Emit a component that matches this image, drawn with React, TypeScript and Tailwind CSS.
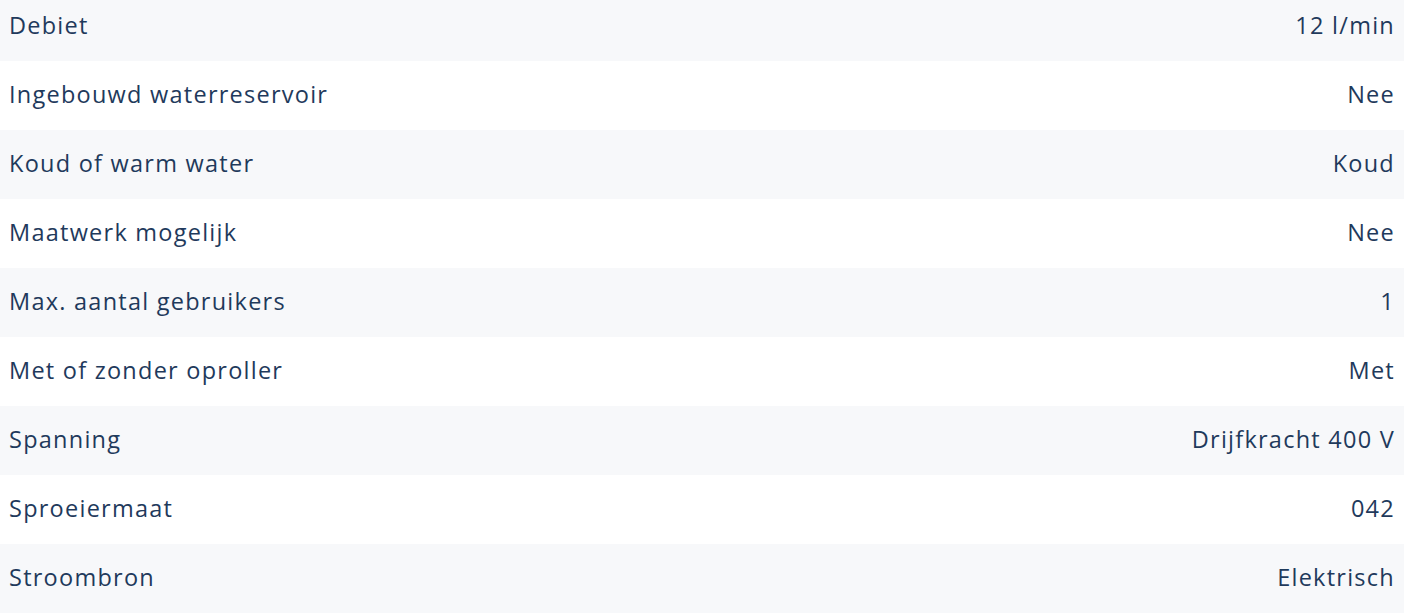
const specs = [
  { label: "Debiet", value: "12 l/min" },
  { label: "Ingebouwd waterreservoir", value: "Nee" },
  { label: "Koud of warm water", value: "Koud" },
  { label: "Maatwerk mogelijk", value: "Nee" },
  { label: "Max. aantal gebruikers", value: "1" },
  { label: "Met of zonder oproller", value: "Met" },
  { label: "Spanning", value: "Drijfkracht 400 V" },
  { label: "Sproeiermaat", value: "042" },
  { label: "Stroombron", value: "Elektrisch" },
];

export default function App() {
  return (
    <div className="min-h-screen bg-white font-['Open_Sans',sans-serif] text-[#1f3a5c]">
      <dl className="-mt-2">
        {specs.map((row, i) => (
          <div
            key={row.label}
            className={`flex h-[69px] items-center justify-between pl-[9px] pr-[9px] pb-[2px] text-[23.5px] tracking-[1.25px] ${
              i % 2 === 0 ? "bg-[#f7f8fa]" : "bg-white"
            }`}
          >
            <dt>{row.label}</dt>
            <dd>{row.value}</dd>
          </div>
        ))}
      </dl>
    </div>
  );
}
